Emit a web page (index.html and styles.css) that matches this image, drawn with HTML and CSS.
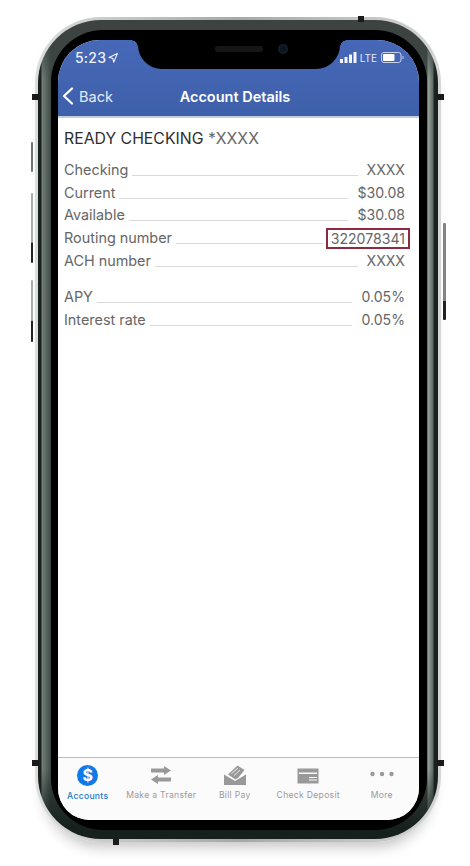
FILE: index.html
```html
<!DOCTYPE html>
<html lang="en">
<head>
<meta charset="utf-8">
<title>Account Details</title>
<link rel="stylesheet" href="styles.css">
</head>
<body>
<div class="phone">
  <span class="btn btn-mute"></span>
  <span class="btn btn-up"></span>
  <span class="btn btn-down"></span>
  <span class="btn btn-power"></span>
  <span class="tick tick-l1"></span>
  <span class="tick tick-r1"></span>
  <span class="tick tick-l2"></span>
  <span class="tick tick-r2"></span>
  <span class="tick tick-t"></span>
  <span class="tick tick-b"></span>
  <div class="band">
    <div class="bezel">
      <div class="screen">
        <div class="notch">
          <span class="speaker"></span>
          <span class="camera"></span>
        </div>
        <header class="appbar">
          <div class="status">
            <span class="time">5:23
              <svg class="loc" viewBox="0 0 10 10"><path d="M9.4.6 1 4.4l3.8.9.9 3.9z" fill="none" stroke="#eef2fb" stroke-width="1.1" stroke-linejoin="round"/></svg>
            </span>
            <span class="sys">
              <svg class="bars" viewBox="0 0 17 11"><g fill="#f4f6fc"><rect x="0" y="7" width="3" height="4"/><rect x="4.500" y="5" width="3" height="6"/><rect x="9" y="2.500" width="3" height="8.500"/><rect x="13.500" y="0" width="3" height="11"/></g></svg>
              <span class="lte">LTE</span>
              <svg class="batt" viewBox="0 0 23 11"><rect x=".5" y=".5" width="19.500" height="10" rx="2.500" fill="none" stroke="#c9d4ec"/><rect x="2" y="2" width="11.500" height="7" rx="1" fill="#fff"/><rect x="21.500" y="4" width="1" height="3" fill="#c9d4ec"/></svg>
            </span>
          </div>
          <div class="nav">
            <span class="back">
              <svg class="chev" viewBox="0 0 12 18"><path d="M10 1.500 2 9l8 7.500" fill="none" stroke="#fff" stroke-width="2.200" stroke-linecap="round" stroke-linejoin="round"/></svg>
              Back
            </span>
            <span class="title">Account Details</span>
          </div>
        </header>
        <main class="content">
          <h1 class="acct">READY CHECKING <span class="mask">*XXXX</span></h1>
          <div class="group">
            <div class="row"><span>Checking</span><i class="leader"></i><span class="val">XXXX</span></div>
            <div class="row"><span>Current</span><i class="leader"></i><span class="val">$30.08</span></div>
            <div class="row"><span>Available</span><i class="leader"></i><span class="val">$30.08</span></div>
            <div class="row"><span>Routing number</span><i class="leader"></i><span class="val boxed">322078341</span></div>
            <div class="row"><span>ACH number</span><i class="leader"></i><span class="val">XXXX</span></div>
          </div>
          <div class="group">
            <div class="row"><span>APY</span><i class="leader"></i><span class="val">0.05%</span></div>
            <div class="row"><span>Interest rate</span><i class="leader"></i><span class="val">0.05%</span></div>
          </div>
        </main>
        <nav class="tabs">
          <div class="tab active">
            <span class="ico dollar">$</span>
            <span class="lbl">Accounts</span>
          </div>
          <div class="tab">
            <svg class="ico" viewBox="0 0 22 20"><path d="M1 3.500h13V1l7 4.500-7 4.500V7.500H1zM21 12.500H8V10l-7 4.500L8 19v-2.500h13z" fill="#999"/></svg>
            <span class="lbl">Make a Transfer</span>
          </div>
          <div class="tab">
            <svg class="ico" viewBox="0 0 22 20"><path d="M0 9.500 11 16l11-6.500V20H0z" fill="#999"/><path d="M4 9.500 13.500.5 20.500 5l-6 7.500-3 2z" fill="#999"/><path d="M7.500 8.500 14 3M10 10.500l6-5.500" stroke="#fcfbfc" stroke-width=".8" fill="none"/></svg>
            <span class="lbl">Bill Pay</span>
          </div>
          <div class="tab">
            <svg class="ico" viewBox="0 0 22 20"><path fill="#999" fill-rule="evenodd" d="M.5 3.500h21v15H.5zM2 7.500V9h18V7.500zM12 12v1h8v-1zM12 14.500v1h8v-1z"/></svg>
            <span class="lbl">Check Deposit</span>
          </div>
          <div class="tab">
            <svg class="ico dots" viewBox="0 0 22 20"><g fill="#999"><circle cx="1.500" cy="9" r="2.200"/><circle cx="11" cy="9" r="2.200"/><circle cx="20.500" cy="9" r="2.200"/></g></svg>
            <span class="lbl">More</span>
          </div>
        </nav>
      </div>
    </div>
  </div>
</div>
</body>
</html>
```
FILE: styles.css
```css
* { box-sizing: border-box; }
html, body { margin: 0; background: #fff; }
body {
  width: 470px;
  height: 866px;
  overflow: hidden;
  padding: 17px 0 0 35px;
  font-family: "Inter", "Liberation Sans", sans-serif;
}

.phone {
  position: relative;
  width: 406px;
  height: 825px;
  padding: 3px;
  border-radius: 66px;
  background: linear-gradient(90deg, #dcdede, #a4a8a6 50%, #d4d6d6);
  box-shadow: 0 14px 14px -9px rgba(0, 0, 0, .24);
}
.band {
  height: 100%;
  padding: 10px 11px 9px 13px;
  border-radius: 63px;
  background:
    linear-gradient(#3c4340 0, #3c4340 14px, transparent 60px),
    linear-gradient(0deg, #16201c 0, #16201c 12px, transparent 70px),
    linear-gradient(90deg, #1b211e 0, #1b211e 3px, #737f79 4px, #3d4843 13px, #3d4843 389px, #97a29c 390px, #5f6a64 395px, #1b211e 396px);
}
.bezel {
  height: 100%;
  padding: 10px 8px 10px 7px;
  border-radius: 52px;
  background: #000;
}
.screen {
  position: relative;
  display: flex;
  flex-direction: column;
  height: 100%;
  overflow: hidden;
  background: #fff;
  border-radius: 42px 42px 32px 32px;
}

/* hardware details */
.btn { position: absolute; width: 2px; background: #6e7472; border-radius: 1px; }
.btn-mute { left: -4px; top: 125px; height: 30px; }
.btn-up { left: -4px; top: 176px; height: 70px; background: linear-gradient(#a8adab 70%, #222 72%); }
.btn-down { left: -4px; top: 263px; height: 62px; background: linear-gradient(#a8adab 65%, #222 67%); }
.btn-power { left: 408px; top: 206px; height: 97px; width: 3px; background: linear-gradient(#7f8583 80%, #222 81%); }
.tick { position: absolute; background: #1a1a1a; z-index: 2; }
.tick-l1, .tick-l2, .tick-r1, .tick-r2 { width: 7px; height: 6px; }
.tick-l1 { left: -3px; top: 77px; }
.tick-l2 { left: -3px; top: 743px; }
.tick-r1 { left: 402px; top: 77px; }
.tick-r2 { left: 402px; top: 743px; }
.tick-t, .tick-b { width: 6px; height: 6px; }
.tick-t { left: 323px; top: -1px; }
.tick-b { left: 78px; top: 822px; }

/* notch */
.notch {
  position: absolute;
  z-index: 3;
  top: 0;
  left: 80px;
  width: 202px;
  height: 29px;
  display: flex;
  justify-content: center;
  align-items: center;
  gap: 15px;
  padding: 0 0 12px 25px;
  background: #000;
  border-radius: 0 0 24px 24px;
}
.notch::before,
.notch::after {
  content: "";
  position: absolute;
  top: 0;
  width: 7px;
  height: 7px;
}
.notch::before { left: -7px; background: radial-gradient(circle at 0 100%, transparent 6.500px, #000 7px); }
.notch::after { right: -7px; background: radial-gradient(circle at 100% 100%, transparent 6.500px, #000 7px); }
.speaker { width: 48px; height: 6px; border-radius: 3px; background: #161616; }
.camera { width: 10px; height: 10px; border-radius: 50%; background: #0b1522; box-shadow: inset 0 0 0 2px #141b24; }

/* header */
.appbar {
  flex: none;
  height: 78px;
  color: #fff;
  background: linear-gradient(#4768b8, #3e60aa);
  border-bottom: 2px solid #c3cde0;
}
.status {
  display: flex;
  justify-content: space-between;
  align-items: center;
  height: 21px;
  margin-top: 7px;
  padding: 0 15px 0 17px;
}
.time { font-size: 14px; font-weight: 500; letter-spacing: .2px; color: #f0f3fb; display: flex; align-items: center; gap: 2px; }
.loc { width: 10px; height: 10px; }
.sys { display: flex; align-items: center; gap: 3px; }
.bars { width: 17px; height: 11px; }
.lte { font-size: 10px; color: #e4e9f6; }
.batt { width: 23px; height: 11px; margin-left: 1px; }
.nav {
  position: relative;
  display: flex;
  align-items: center;
  justify-content: center;
  height: 24px;
  margin-top: 16px;
  padding-right: 7px;
}
.back {
  position: absolute;
  left: 4px;
  top: 0;
  height: 24px;
  display: flex;
  align-items: center;
  gap: 5px;
  font-size: 14.500px;
  color: #e6ebf7;
}
.chev { width: 12px; height: 18px; }
.title { font-size: 14.500px; font-weight: 600; }

/* body */
.content {
  flex: 1;
  padding: 11px 14px 0 6px;
  color: #666;
  font-size: 14.400px;
}
.acct {
  margin: 0 0 9px;
  font-size: 15.800px;
  line-height: 20px;
  font-weight: 400;
  color: #2e2e2e;
}
.mask { color: #666; }
.group { margin-bottom: 13px; }
.row {
  display: flex;
  align-items: flex-end;
  height: 22.800px;
  line-height: 22px;
}
.leader {
  flex: 1;
  height: 1px;
  margin: 0 9px 5px 4px;
  background: #d9d9dc;
}
.val { white-space: nowrap; font-size: 14.100px; }
.boxed {
  margin: 0 -5px 0 -6px;
  padding: 0 3px 0 3px;
  line-height: 17px;
  height: 21px;
  border: 2px solid #8c2a40;
}

/* tabs */
.tabs {
  flex: none;
  display: grid;
  grid-template-columns: repeat(5, 73.500px);
  height: 63px;
  padding-top: 7px;
  background: #fcfbfc;
  border-top: 1px solid #bdbdbd;
}
.tab {
  position: relative;
  left: -7px;
  display: flex;
  flex-direction: column;
  align-items: center;
  gap: 4px;
  color: #9a9a9a;
}
.ico { width: 22px; height: 20px; display: block; }
.dots { overflow: visible; }
.dollar {
  width: 21px;
  height: 21px;
  border-radius: 50%;
  background: #0f7ae5;
  color: #fff;
  font-size: 16px;
  line-height: 21px;
  font-weight: 700;
  text-align: center;
}
.lbl { font-size: 8.600px; line-height: 12px; letter-spacing: .3px; white-space: nowrap; }
.active .lbl { color: #1878cf; font-weight: 500; }
```
